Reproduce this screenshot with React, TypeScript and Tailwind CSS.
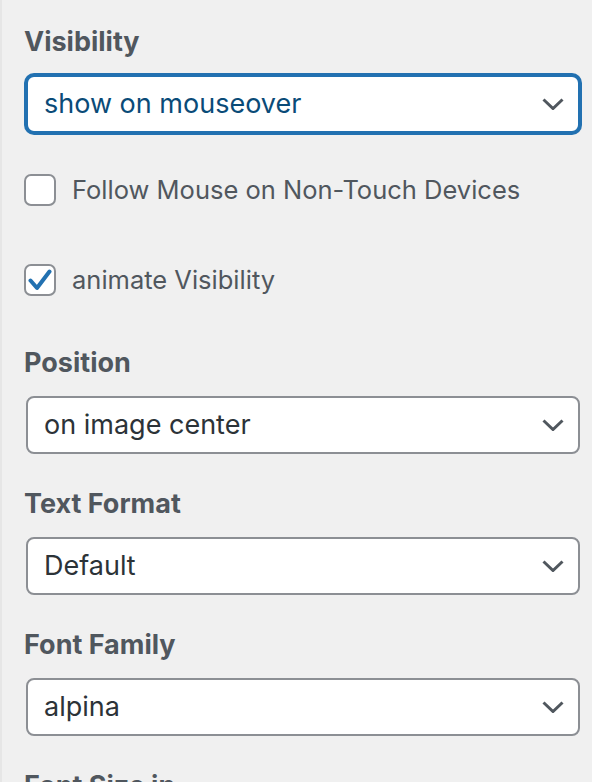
import React, { useState } from 'react';

const Chevron = () => (
  <svg className="absolute right-[14px] top-1/2 -translate-y-1/2 w-[22px] h-[12px] pointer-events-none" viewBox="0 0 22 12" fill="none">
    <path d="M1.5 1.5L11 10.5L20.5 1.5" stroke="#50575e" strokeWidth="3" />
  </svg>
);

interface SelectFieldProps {
  label: string;
  value: string;
  focused?: boolean;
  className?: string;
}

const SelectField: React.FC<SelectFieldProps> = ({ label, value, focused = false, className = '' }) => (
  <div className={className}>
    <div className="h-[32px] leading-[32px] text-[27px] font-bold text-[#50575e]">{label}</div>
    <div
      className={`relative mx-[2px] mt-[17px] h-[58px] rounded-[8px] bg-white border-2 flex items-center pl-[16px] ${
        focused ? 'border-[#2271b1] shadow-[0_0_0_2px_#2271b1]' : 'border-[#8c8f94]'
      }`}
    >
      <span className={`text-[27px] leading-[32px] ${focused ? 'text-[#0a4b78]' : 'text-[#2c3338]'}`}>{value}</span>
      <Chevron />
    </div>
  </div>
);

const Checkbox: React.FC<{ label: string; checked: boolean; onToggle: () => void; className?: string }> = ({
  label,
  checked,
  onToggle,
  className = '',
}) => (
  <label className={`flex items-center gap-[16px] h-[32px] cursor-pointer ${className}`} onClick={onToggle}>
    <span className="relative w-[32px] h-[32px] rounded-[7px] border-2 border-[#8c8f94] bg-white shrink-0">
      {checked && (
        <svg className="absolute left-[2px] top-[3px] w-[24px] h-[22px]" viewBox="0 0 24 22">
          <path d="M2.5 11.5L9 19L21.5 2.5" stroke="#2271b1" strokeWidth="4" fill="none" strokeLinecap="round" strokeLinejoin="round" />
        </svg>
      )}
    </span>
    <span className="text-[25.5px] leading-[32px] text-[#50575e]">{label}</span>
  </label>
);

export default function App() {
  const [follow, setFollow] = useState(false);
  const [animate, setAnimate] = useState(true);

  return (
    <div
      className="w-[592px] h-[782px] overflow-hidden bg-[#f0f0f0] border-l-2 border-[#e6e6e6] pl-[22px] pr-[10px] pt-[27px]"
      style={{ fontFamily: 'Inter, "Noto Sans", sans-serif' }}
    >
      <div className="-mt-px">
        <SelectField label="Visibility" value="show on mouseover" focused />
      </div>
      <Checkbox className="mt-[41px]" label="Follow Mouse on Non-Touch Devices" checked={follow} onToggle={() => setFollow(!follow)} />
      <Checkbox className="mt-[58px]" label="animate Visibility" checked={animate} onToggle={() => setAnimate(!animate)} />
      <SelectField className="mt-[51px]" label="Position" value="on image center" />
      <SelectField className="mt-[34px]" label="Text Format" value="Default" />
      <SelectField className="mt-[34px]" label="Font Family" value="alpina" />
      <div className="mt-[34px] h-[32px] leading-[32px] text-[27px] font-bold text-[#50575e]">Font Size in</div>
    </div>
  );
}
